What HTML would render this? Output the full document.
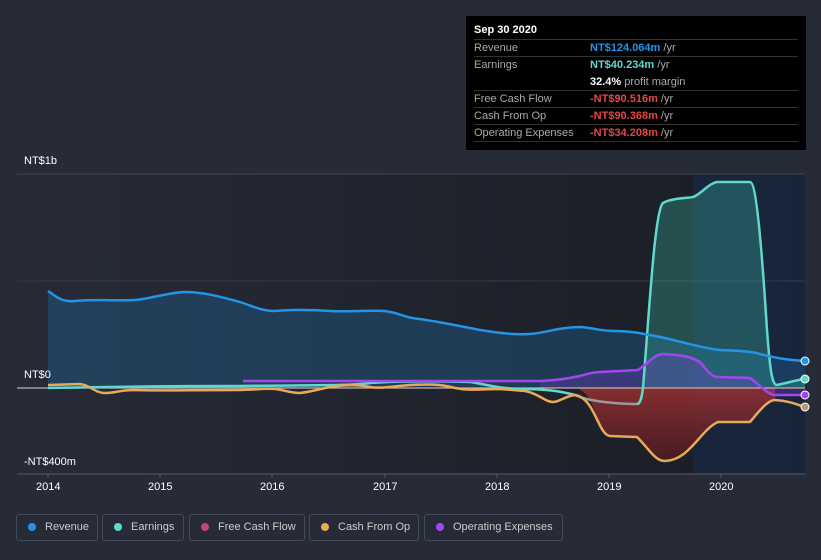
<!DOCTYPE html>
<html><head><meta charset="utf-8"><style>
*{margin:0;padding:0;box-sizing:border-box}
body{width:821px;height:560px;background:#262b37;font-family:"Liberation Sans",sans-serif;position:relative;overflow:hidden}
.t{position:absolute;font-size:11px;color:#fff}
.tip{position:absolute;left:466px;top:16px;width:340px;height:134px;background:#000;padding:8px 8px}
.tip .h{font-weight:bold;font-size:11px;color:#fff;height:16px;line-height:13px;border-bottom:1px solid #333}
.row{display:flex;font-size:11px;height:17px;line-height:17px;border-bottom:1px solid #333;color:#aaa}
.row .l{width:116px}
.row b{font-weight:bold}
.leg{position:absolute;top:514px;height:27px;border:1px solid #444a56;border-radius:3px;color:#ccc;font-size:11px;line-height:25px;padding-left:28px}
.leg i{position:absolute;left:11px;top:8px;width:8px;height:8px;border-radius:50%}
</style></head><body>
<svg width="821" height="560" style="position:absolute;left:0;top:0">
<defs>
<linearGradient id="bg" x1="0" x2="1"><stop offset="0" stop-color="#262b37"/><stop offset="1" stop-color="#1a1d24"/></linearGradient>
<linearGradient id="rf" x1="0" y1="0" x2="0" y2="1"><stop offset="0" stop-color="#a83232" stop-opacity=".75"/><stop offset="1" stop-color="#5a1a1f" stop-opacity=".7"/></linearGradient>
</defs>
<rect x="17" y="174" width="788" height="300" fill="url(#bg)"/>
<rect x="693" y="174" width="112" height="300" fill="#182740" opacity=".85"/>
<line x1="17" y1="174" x2="805" y2="174" stroke="#3f4550"/>
<line x1="17" y1="281" x2="805" y2="281" stroke="#333a46"/>
<line x1="17" y1="474" x2="805" y2="474" stroke="#555b66"/>
<g stroke="#555b66"><line x1="48" y1="474" x2="48" y2="478"/><line x1="160" y1="474" x2="160" y2="478"/><line x1="272" y1="474" x2="272" y2="478"/><line x1="385" y1="474" x2="385" y2="478"/><line x1="497" y1="474" x2="497" y2="478"/><line x1="609" y1="474" x2="609" y2="478"/><line x1="721" y1="474" x2="721" y2="478"/></g>
<path d="M48 291 C58 298 62 302 75 301 C90 299 110 301 135 300 C150 299 170 292 185 292 C205 292 225 298 240 302 C255 307 262 311 275 311 C290 310 300 309 330 311 C350 312 370 310 385 311 C400 313 405 318 420 319 C440 322 460 326 480 330 C500 333 515 335 530 334 C545 333 560 327 580 327 C595 328 600 331 615 331 C630 331 640 333 660 337 C680 341 700 348 720 350 C740 351 750 351 760 354 C780 359 790 360 805 361 L805 388 L48 388Z" fill="#1f6aa3" opacity=".35"/>
<path d="M580 390 C595 395 598 435 610 436 L637 437 C650 450 655 461 665 461 C690 460 700 430 718 422 L750 422 C760 410 768 400 775 400 L775 388 L580 388Z" fill="url(#rf)"/>
<path d="M643 388 C650 300 655 210 663 203 C670 198 690 198 693 197 C700 195 710 182 718 182 L750 182 C755 182 760 220 767 330 C770 370 772 385 777 385 L803 379 L805 379 L805 388Z" fill="#3aa89a" opacity=".35"/>
<path d="M540 381 C560 380 570 378 580 376 C590 373 595 372 600 372 L638 370 C650 362 655 354 663 354 C680 355 690 356 700 362 C708 372 712 377 718 377 L750 378 C760 385 768 395 775 395 L805 395 L805 388 L540 388Z" fill="#7b3fd0" opacity=".3"/>
<line x1="17" y1="388" x2="805" y2="388" stroke="#c8b0b0" stroke-width="1.2"/>
<g fill="none" stroke-width="2.5" stroke-linejoin="round">
<path d="M48 388 C100 387 150 386 240 386 C300 385 350 386 370 383 C400 381 430 381 470 382 C485 384 495 388 520 389 C545 389 560 391 575 395" stroke="#5fd9cc"/>
<path d="M575 395 C590 402 620 404 637 404" stroke="#9a9a9a"/>
<path d="M637 404 C641 404 642 395 643 388 C650 300 655 210 663 203 C670 198 690 198 693 197 C700 195 710 182 718 182 L750 182 C755 182 760 220 767 330 C770 370 772 385 777 385 L803 379" stroke="#5fd9cc"/>
<path d="M48 385 L80 384 C90 385 95 393 105 393 C115 393 120 390 135 390 C160 391 190 390 240 390 C255 390 265 388 275 389 C285 390 290 393 300 393 C310 392 315 390 330 387 C345 385 355 384 370 387 C380 389 395 386 410 385 C430 384 440 384 455 388 C470 391 480 389 500 389 L525 391 C540 394 545 402 553 402 C560 402 565 396 575 395" stroke="#e9a95a"/>
<path d="M575 395 C595 398 598 435 610 436 L637 437 C650 450 655 461 665 461 C690 460 700 430 718 422 L750 422 C760 410 768 400 775 400 C790 401 798 405 805 407" stroke="#e9a95a"/>
<path d="M243 381 L540 381 C560 380 570 378 580 376 C590 373 595 372 600 372 L638 370 C650 362 655 354 663 354 C680 355 690 356 700 362 C708 372 712 377 718 377 L750 378 C760 385 768 395 775 395 L805 395" stroke="#a346f0"/>
<path d="M48 291 C58 298 62 302 75 301 C90 299 110 301 135 300 C150 299 170 292 185 292 C205 292 225 298 240 302 C255 307 262 311 275 311 C290 310 300 309 330 311 C350 312 370 310 385 311 C400 313 405 318 420 319 C440 322 460 326 480 330 C500 333 515 335 530 334 C545 333 560 327 580 327 C595 328 600 331 615 331 C630 331 640 333 660 337 C680 341 700 348 720 350 C740 351 750 351 760 354 C780 359 790 360 805 361" stroke="#2394e6"/>
</g>
<g stroke="#fff" stroke-width="1"><circle cx="805" cy="361" r="4" fill="#2394e6"/><circle cx="805" cy="379" r="4" fill="#5fd9cc"/><circle cx="805" cy="395" r="4" fill="#a346f0"/><circle cx="805" cy="407" r="4" fill="#b39a7a"/></g>
</svg>
<div class="t" style="left:24px;top:155px">NT$1b</div>
<div class="t" style="left:24px;top:369px">NT$0</div>
<div class="t" style="left:24px;top:456px">-NT$400m</div>
<div class="t" style="left:36px;top:481px">2014</div>
<div class="t" style="left:148px;top:481px">2015</div>
<div class="t" style="left:260px;top:481px">2016</div>
<div class="t" style="left:373px;top:481px">2017</div>
<div class="t" style="left:485px;top:481px">2018</div>
<div class="t" style="left:597px;top:481px">2019</div>
<div class="t" style="left:709px;top:481px">2020</div>
<div class="tip">
<div class="h">Sep 30 2020</div>
<div class="row"><span class="l">Revenue</span><span><b style="color:#2394e6">NT$124.064m</b> /yr</span></div>
<div class="row" style="border:none"><span class="l">Earnings</span><span><b style="color:#5fd9cc">NT$40.234m</b> /yr</span></div>
<div class="row"><span class="l"></span><span><b style="color:#fff">32.4%</b> profit margin</span></div>
<div class="row"><span class="l">Free Cash Flow</span><span><b style="color:#e84545">-NT$90.516m</b> /yr</span></div>
<div class="row"><span class="l">Cash From Op</span><span><b style="color:#e84545">-NT$90.368m</b> /yr</span></div>
<div class="row"><span class="l">Operating Expenses</span><span><b style="color:#e84545">-NT$34.208m</b> /yr</span></div>
</div>
<div class="leg" style="left:16px;width:82px"><i style="background:#2394e6"></i>Revenue</div>
<div class="leg" style="left:102px;width:82px"><i style="background:#5fd9cc"></i>Earnings</div>
<div class="leg" style="left:189px;width:116px"><i style="background:#c0447f"></i>Free Cash Flow</div>
<div class="leg" style="left:309px;width:110px"><i style="background:#e9a95a"></i>Cash From Op</div>
<div class="leg" style="left:424px;width:139px"><i style="background:#a346f0"></i>Operating Expenses</div>
</body></html>
